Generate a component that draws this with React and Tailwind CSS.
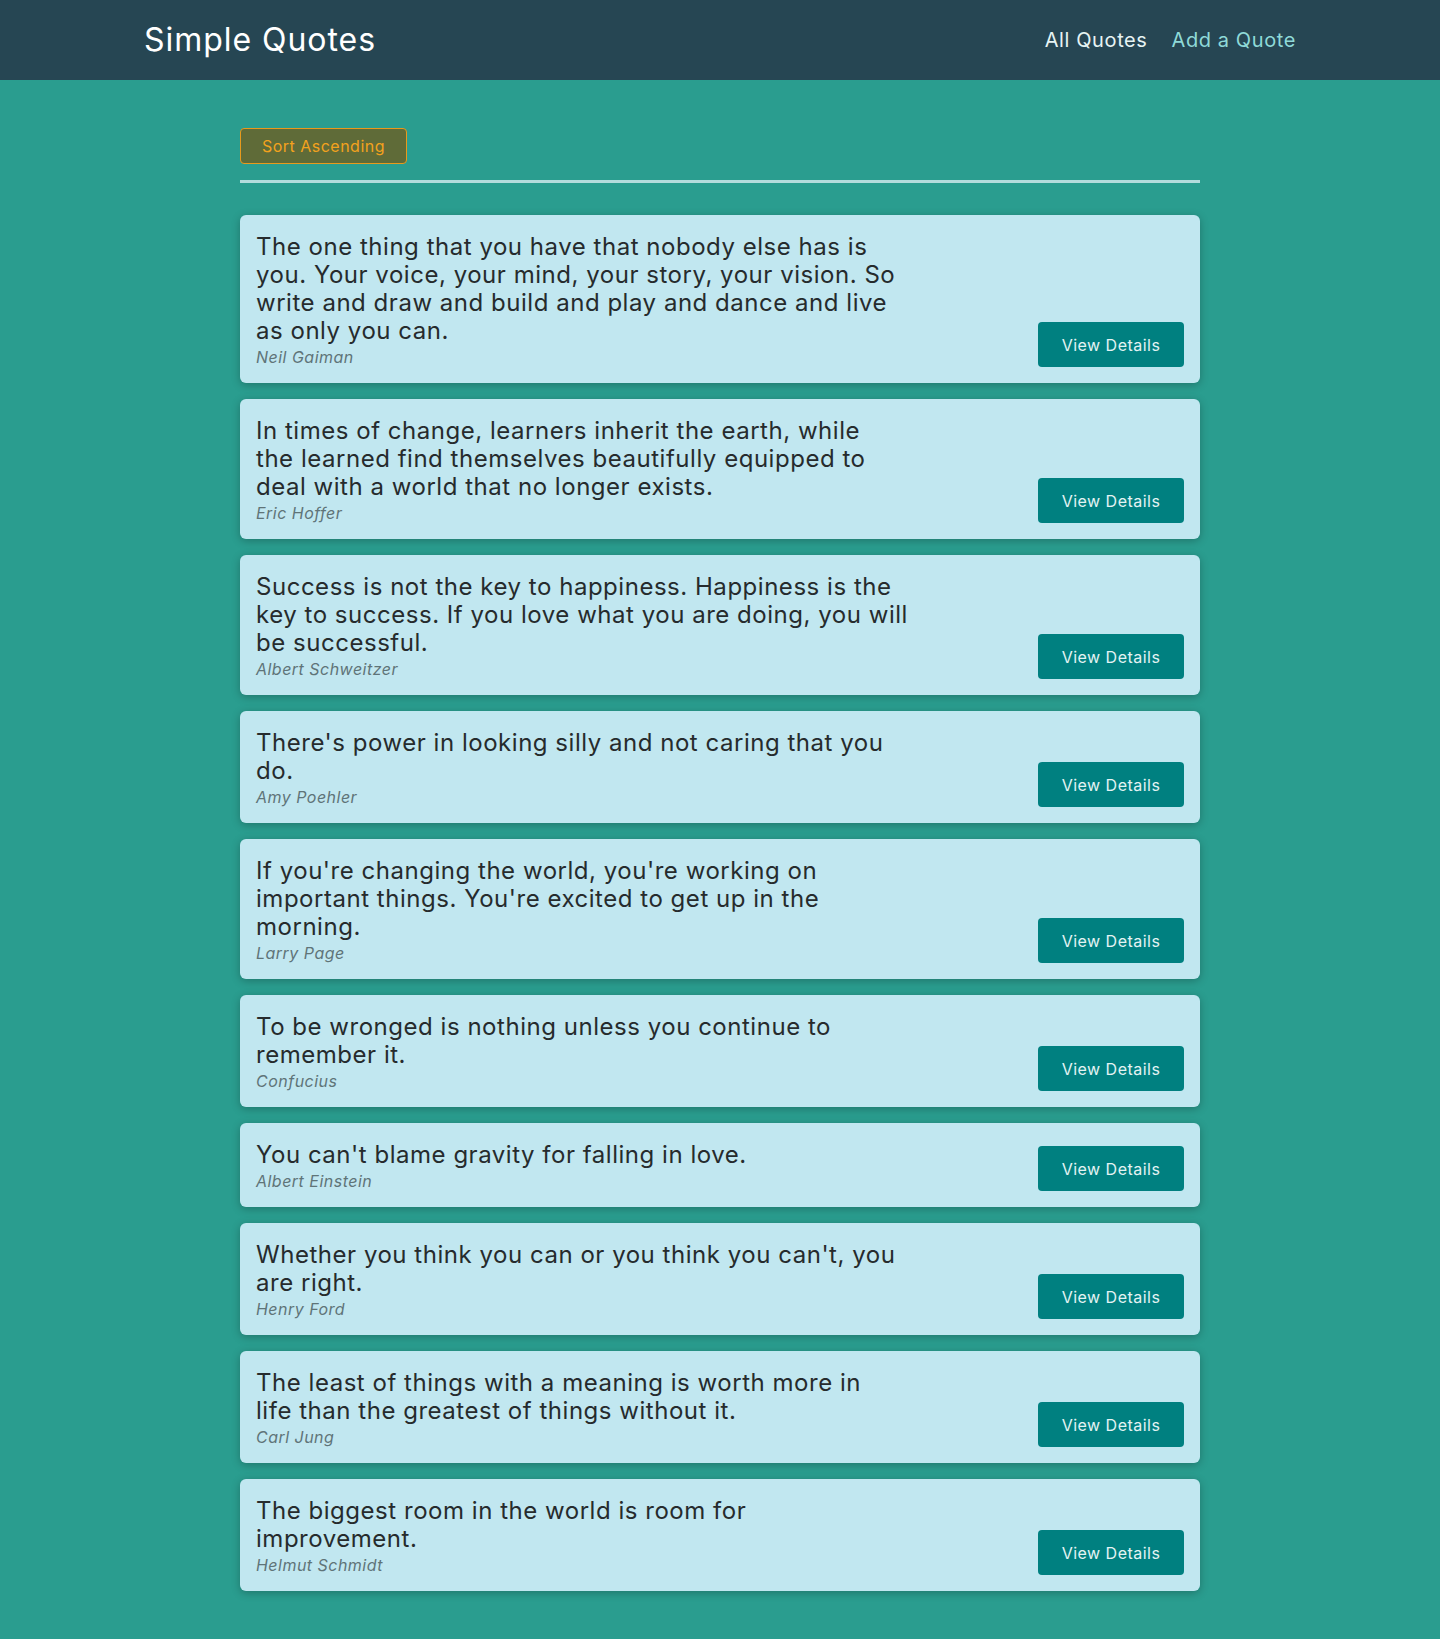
// line breaks follow the original layout
const QUOTES = [
  {
    id: "q1",
    text: "The one thing that you have that nobody else has is\nyou. Your voice, your mind, your story, your vision. So\nwrite and draw and build and play and dance and live\nas only you can.",
    author: "Neil Gaiman",
  },
  {
    id: "q2",
    text: "In times of change, learners inherit the earth, while\nthe learned find themselves beautifully equipped to\ndeal with a world that no longer exists.",
    author: "Eric Hoffer",
  },
  {
    id: "q3",
    text: "Success is not the key to happiness. Happiness is the\nkey to success. If you love what you are doing, you will\nbe successful.",
    author: "Albert Schweitzer",
  },
  {
    id: "q4",
    text: "There's power in looking silly and not caring that you\ndo.",
    author: "Amy Poehler",
  },
  {
    id: "q5",
    text: "If you're changing the world, you're working on\nimportant things. You're excited to get up in the\nmorning.",
    author: "Larry Page",
  },
  {
    id: "q6",
    text: "To be wronged is nothing unless you continue to\nremember it.",
    author: "Confucius",
  },
  {
    id: "q7",
    text: "You can't blame gravity for falling in love.",
    author: "Albert Einstein",
  },
  {
    id: "q8",
    text: "Whether you think you can or you think you can't, you\nare right.",
    author: "Henry Ford",
  },
  {
    id: "q9",
    text: "The least of things with a meaning is worth more in\nlife than the greatest of things without it.",
    author: "Carl Jung",
  },
  {
    id: "q10",
    text: "The biggest room in the world is room for\nimprovement.",
    author: "Helmut Schmidt",
  },
];

function MainNavigation() {
  return (
    <header className="h-20 bg-[#264653] px-[144px] flex items-center justify-between">
      <div className="text-[32px] text-white leading-none tracking-[0.03em]">
        Simple Quotes
      </div>
      <nav>
        <ul className="flex items-center gap-6 text-[20px] tracking-[0.03em]">
          <li>
            <a href="#" className="text-[#e6f4f4]">
              All Quotes
            </a>
          </li>
          <li>
            <a href="#" className="text-[#8fdad8]">
              Add a Quote
            </a>
          </li>
        </ul>
      </nav>
    </header>
  );
}

function QuoteItem({ text, author }) {
  return (
    <li className="flex items-end justify-between gap-4 p-4 bg-[#c1e7f0] rounded-md shadow-[0_2px_8px_rgba(0,0,0,0.25)]">
      <figure className="w-[680px] pt-0.5 -mb-0.5">
        <blockquote className="text-[24px] leading-[28px] text-[#262b2d] tracking-[0.022em] whitespace-pre-line">
          <p>{text}</p>
        </blockquote>
        <figcaption className="text-[16px] leading-6 italic text-[#5f7478] tracking-[0.03em]">
          {author}
        </figcaption>
      </figure>
      <a
        href="#"
        className="shrink-0 w-[146px] h-[45px] flex items-center justify-center rounded bg-[#008080] text-[#e3f3f3] text-[16px] tracking-[0.03em]"
      >
        View Details
      </a>
    </li>
  );
}

export default function App() {
  return (
    <div className="min-h-[1639px] bg-[#2a9d8f] font-['Inter',sans-serif]">
      <MainNavigation />
      <main className="w-[960px] mx-auto pt-12 pb-12">
        <div className="pb-4 border-b-[3px] border-[#b3dcdc]">
          <button className="h-9 w-[167px] rounded border border-[#e89a1c] bg-[#5f6b38] text-[#f3a21d] text-[16px] tracking-[0.03em]">
            Sort Ascending
          </button>
        </div>
        <ul className="mt-8 flex flex-col gap-4">
          {QUOTES.map((q) => (
            <QuoteItem key={q.id} text={q.text} author={q.author} />
          ))}
        </ul>
      </main>
    </div>
  );
}
